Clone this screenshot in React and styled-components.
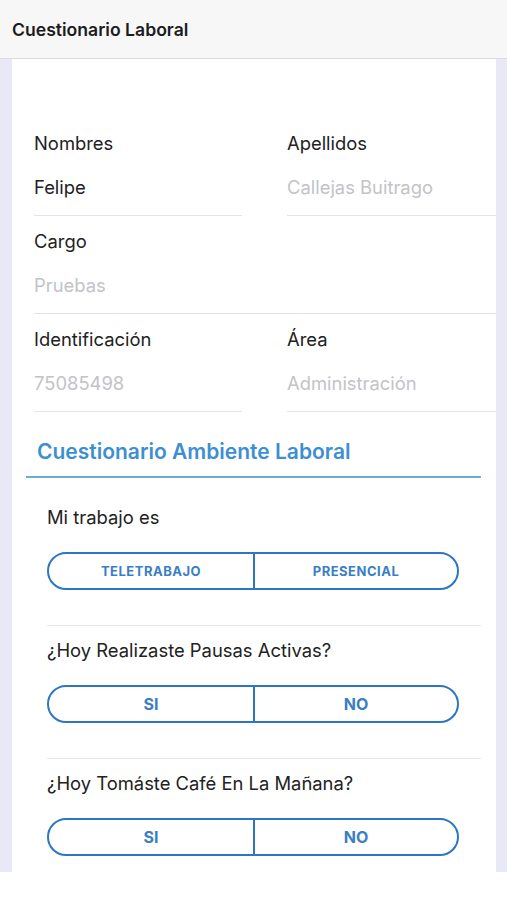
import styled, { createGlobalStyle } from "styled-components";

const GlobalStyle = createGlobalStyle`
  body {
    margin: 0;
    background: #ffffff;
    font-family: Inter, "Noto Sans", sans-serif;
    -webkit-font-smoothing: antialiased;
  }
`;

const Header = styled.header`
  height: 58px;
  display: flex;
  align-items: center;
  padding-left: 12px;
  background: #f7f7f8;
  border-bottom: 1px solid #dcdcdf;
  font-size: 17.6px;
  font-weight: 600;
  color: #1c1c1e;
`;

const Backdrop = styled.main`
  background: #e8e8f7;
  padding: 0 11px 0 12px;
`;

const Card = styled.div`
  background: #ffffff;
  padding: 73px 0 16px 0;
`;

const FieldGrid = styled.div`
  display: grid;
  grid-template-columns: 208px 1fr;
  column-gap: 45px;
  row-gap: 14px;
  padding-left: 22px;
`;

const Field = styled.div`
  grid-column: ${({ $wide }) => ($wide ? "1 / -1" : "auto")};
  display: flex;
  flex-direction: column;
  gap: 22px;
  padding-bottom: 17px;
  border-bottom: 1px solid #e4e4e6;
`;

const Label = styled.span`
  font-size: 18.4px;
  line-height: 22px;
  color: #222222;
`;

const Value = styled.span`
  font-size: 18.4px;
  line-height: 22px;
  color: ${({ $filled }) => ($filled ? "#222222" : "#c3c3c7")};
`;

const Section = styled.div`
  margin: 28px 15px 0 14px;
  padding: 0 0 12px 11px;
  border-bottom: 2px solid #6badd7;
  font-size: 21px;
  line-height: 24px;
  font-weight: 600;
  color: #3d8fd1;
`;

const Questions = styled.div`
  padding: 0 15px 0 35px;
`;

const Question = styled.div`
  display: flex;
  flex-direction: column;
  gap: 24px;
  padding-top: ${({ $first }) => ($first ? "28px" : "13px")};
  padding-bottom: ${({ $last }) => ($last ? "0" : "35px")};
  border-bottom: ${({ $last }) => ($last ? "none" : "1px solid #e6e6e8")};
`;

const QuestionText = styled.span`
  font-size: 18.4px;
  line-height: 22px;
  color: #222222;
`;

const Segmented = styled.div`
  width: 412px;
  height: 38px;
  box-sizing: border-box;
  display: grid;
  grid-template-columns: 1fr 1fr;
  border: 2px solid #2b77c6;
  border-radius: 19px;
  overflow: hidden;
`;

const Option = styled.button`
  border: none;
  background: transparent;
  font-family: inherit;
  font-weight: 700;
  color: #3a7ec3;
  font-size: ${({ $small }) => ($small ? "13px" : "16px")};
  letter-spacing: ${({ $small }) => ($small ? "0.5px" : "0")};
  padding: 0;
  & + & {
    border-left: 2px solid #2b77c6;
  }
`;

const fields = [
  { label: "Nombres", value: "Felipe", filled: true },
  { label: "Apellidos", value: "Callejas Buitrago" },
  { label: "Cargo", value: "Pruebas", wide: true },
  { label: "Identificación", value: "75085498" },
  { label: "Área", value: "Administración" },
];

const questions = [
  { text: "Mi trabajo es", options: ["TELETRABAJO", "PRESENCIAL"], small: true },
  { text: "¿Hoy Realizaste Pausas Activas?", options: ["SI", "NO"] },
  { text: "¿Hoy Tomáste Café En La Mañana?", options: ["SI", "NO"] },
];

const App = () => {
  return (
    <>
      <GlobalStyle />
      <Header>Cuestionario Laboral</Header>
      <Backdrop>
        <Card>
          <FieldGrid>
            {fields.map((f) => (
              <Field key={f.label} $wide={f.wide}>
                <Label>{f.label}</Label>
                <Value $filled={f.filled}>{f.value}</Value>
              </Field>
            ))}
          </FieldGrid>
          <Section>Cuestionario Ambiente Laboral</Section>
          <Questions>
            {questions.map((q, i) => (
              <Question
                key={q.text}
                $first={i === 0}
                $last={i === questions.length - 1}
              >
                <QuestionText>{q.text}</QuestionText>
                <Segmented>
                  {q.options.map((o) => (
                    <Option key={o} $small={q.small}>
                      {o}
                    </Option>
                  ))}
                </Segmented>
              </Question>
            ))}
          </Questions>
        </Card>
      </Backdrop>
    </>
  );
};

export default App;
